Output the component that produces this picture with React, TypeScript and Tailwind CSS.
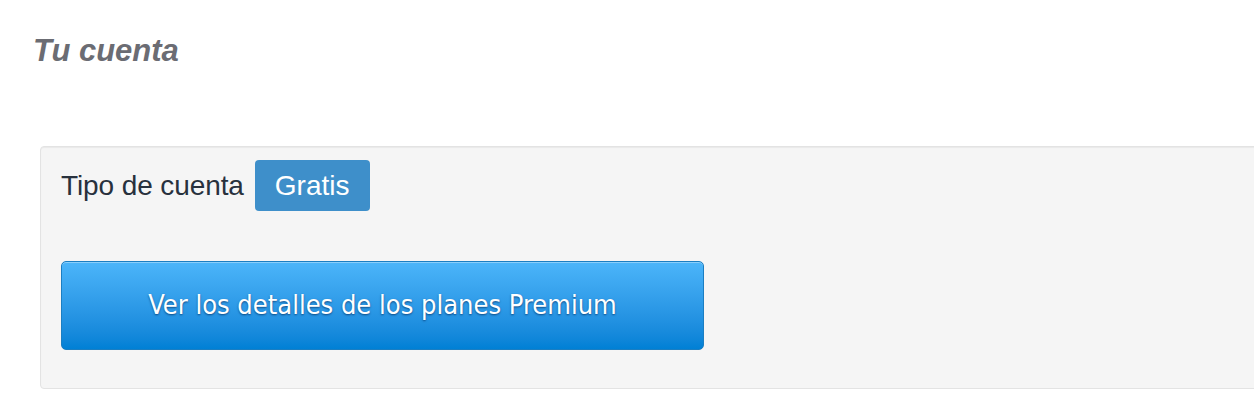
export default function App() {
  return (
    <div className="w-[1254px] h-[408px] overflow-hidden bg-white" style={{ fontFamily: '"Liberation Sans", Arial, sans-serif' }}>
      <div className="pl-[33px] pt-[34px]">
        <h1 className="text-[31px] leading-[34px] font-bold italic text-[#6b6c73]">Tu cuenta</h1>
      </div>

      <div className="ml-[40px] mt-[78px] w-[1240px] h-[243px] bg-[#f5f5f5] border border-[#e3e3e3] rounded-[4px] shadow-[inset_0_1px_1px_rgba(0,0,0,0.05)] pl-[20px] pt-[13px]">
        <div className="flex items-center gap-[11px]">
          <span className="text-[28px] tracking-[-0.1px] text-[#28313d]">Tipo de cuenta</span>
          <span className="h-[51px] px-[20px] flex items-center rounded-[4px] bg-[#3e8fca] text-white text-[28px]">Gratis</span>
        </div>

        <button
          className="mt-[50px] w-[643px] h-[89px] rounded-[5px] border border-[#1b7ec2] bg-gradient-to-b from-[#4bb5fa] to-[#0080d5] text-white text-[27px] shadow-[inset_0_1px_0_rgba(255,255,255,0.35)] [text-shadow:0_1px_2px_rgba(0,40,90,0.7)]"
          style={{ fontFamily: '"DejaVu Sans Condensed", "DejaVu Sans", sans-serif' }}
        >
          Ver los detalles de los planes Premium
        </button>
      </div>
    </div>
  )
}
